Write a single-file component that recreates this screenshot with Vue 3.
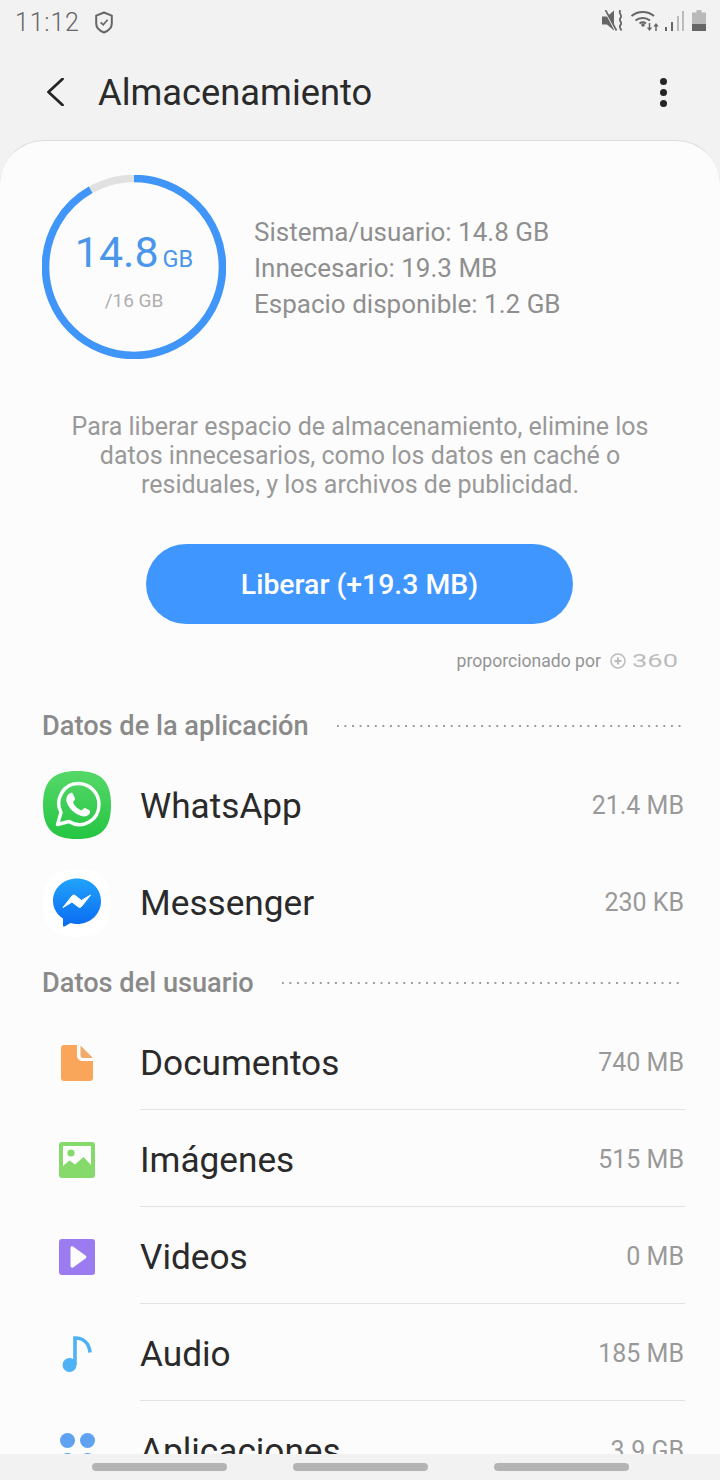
<script setup>
const appRows = [
  { name: 'WhatsApp', size: '21.4 MB', icon: 'whatsapp' },
  { name: 'Messenger', size: '230 KB', icon: 'messenger' }
];

const userRows = [
  { name: 'Documentos', size: '740 MB', icon: 'doc' },
  { name: 'Imágenes', size: '515 MB', icon: 'image' },
  { name: 'Videos', size: '0 MB', icon: 'video' },
  { name: 'Audio', size: '185 MB', icon: 'audio' },
  { name: 'Aplicaciones', size: '3.9 GB', icon: 'apps' }
];

const radius = 88.5;
const circumference = 2 * Math.PI * radius;
const used = 0.917;
const ringDash = `${circumference * used} ${circumference}`;
</script>

<template>
  <div class="page">
    <div class="status">
      <span class="clock">11:12</span>
      <svg class="shield" width="18" height="23" viewBox="0 0 18 23" fill="none" stroke="#666" stroke-width="2">
        <path d="M9 1.500 16.800 4.600V12.500C16.800 16.800 13 20 9 21.500 5 20 1.200 16.800 1.200 12.500V4.600Z" stroke-linejoin="round" />
        <path d="M5.600 11.300 8.200 13.800 12.600 8.800" stroke-width="1.700" />
      </svg>
      <svg class="status-right" width="110" height="24" viewBox="0 0 110 24">
        <path d="M1 6.500H6L13 .5 V20.500L6 14.500H1Z" fill="#666" />
        <path d="M3.500 0 14 20" stroke="#f2f2f2" stroke-width="1.600" />
        <path d="M4.500 0 15.500 20.500" stroke="#666" stroke-width="1.600" />
        <path d="M19.500 0C16.500 3 22 5 19.500 8 17 10.500 22 12.500 19.500 15 17.500 17 20 19 20.500 20.500" fill="none" stroke="#666" stroke-width="1.800" />
        <path d="M30.500 6C36.500 .5 47 .5 53 6M34.500 10.500C38.500 7 45 7 49 10.500M38.500 13.500C40.500 12 43 12 45 13.500" fill="none" stroke="#666" stroke-width="2" />
        <circle cx="42" cy="15" r="1.800" fill="#666" />
        <path d="M48.500 13V18" stroke="#666" stroke-width="1.500" />
        <path d="M45.800 17.500H51.200L48.500 21Z" fill="#666" />
        <path d="M55 21V16" stroke="#666" stroke-width="1.500" />
        <path d="M52.300 16.500H57.700L55 13Z" fill="#666" />
        <rect x="64" y="17" width="2" height="4" fill="#666" />
        <rect x="70" y="12" width="2" height="9" fill="#666" />
        <rect x="76" y="6" width="2" height="15" fill="#bbb" />
        <rect x="81" y="1" width="2" height="20" fill="#bbb" />
        <path d="M91 2.500H95.500V0H100.500V2.500H105V21H91Z" fill="#b9b9b9" />
        <rect x="91" y="14" width="14" height="7" fill="#666" />
      </svg>
    </div>

    <div class="topbar">
      <svg class="back" width="18" height="28" viewBox="0 0 18 28" fill="none" stroke="#252525" stroke-width="2.800">
        <path d="M16.500 1 2.500 14 16.500 27" stroke-linecap="round" stroke-linejoin="round" />
      </svg>
      <h1 class="title">Almacenamiento</h1>
      <div class="more"><i></i><i></i><i></i></div>
    </div>

    <div class="card">
      <div class="summary">
        <div class="ring">
          <svg width="184" height="184" viewBox="0 0 184 184">
            <circle cx="92" cy="92" :r="radius" fill="none" stroke="#e1e1e1" stroke-width="7.500" />
            <circle
              cx="92"
              cy="92"
              :r="radius"
              fill="none"
              stroke="#4096f8"
              stroke-width="7.500"
              :stroke-dasharray="ringDash"
              transform="rotate(-90 92 92)"
            />
          </svg>
          <div class="ring-text">
            <div class="ring-value">14.8<span class="ring-unit">GB</span></div>
            <div class="ring-total">/16 GB</div>
          </div>
        </div>
        <div class="info">
          <div>Sistema/usuario: 14.8 GB</div>
          <div>Innecesario: 19.3 MB</div>
          <div>Espacio disponible: 1.2 GB</div>
        </div>
      </div>

      <p class="hint">Para liberar espacio de almacenamiento, elimine los datos innecesarios, como los datos en caché o residuales, y los archivos de publicidad.</p>

      <button class="free">Liberar (+19.3 MB)</button>

      <div class="powered">
        <span>proporcionado por</span>
        <svg width="72" height="24" viewBox="0 0 72 24">
          <circle cx="8" cy="12" r="7" fill="none" stroke="#bdbdbd" stroke-width="1.600" />
          <path d="M4.500 12H11.500M8 8.500V15.500" stroke="#bdbdbd" stroke-width="2.200" />
          <text x="22" y="18" textLength="46" lengthAdjust="spacingAndGlyphs" class="logo-text">360</text>
        </svg>
      </div>

      <div class="section">
        <span>Datos de la aplicación</span>
        <div class="dots"></div>
      </div>
      <div v-for="row in appRows" :key="row.name" class="row">
        <div class="icon">
          <svg v-if="row.icon === 'whatsapp'" class="wa-icon" width="68" height="68" viewBox="0 0 68 68">
            <defs>
              <linearGradient id="wa" x1="0" y1="0" x2="0" y2="1">
                <stop offset="0" stop-color="#55d868" />
                <stop offset="1" stop-color="#25c543" />
              </linearGradient>
            </defs>
            <path d="M34 0C58 0 68 10 68 34S58 68 34 68 0 58 0 34 10 0 34 0Z" fill="url(#wa)" />
            <path d="M14.500 53.500 18 41.500C11.500 29 20 12.500 35 12.500 47 12.500 56 22 56 33.500 56 49 39.500 59 26 50.500Z" fill="none" stroke="#fff" stroke-width="3.400" stroke-linejoin="round" />
            <path d="M26.500 22.500C28 21.500 29.500 21.500 30 23L32 27.500C32.300 28.500 30.500 30.500 30 31.300 31.500 35 34.500 38 38.500 39.500 39.500 38.800 41 36.800 42 37L46.500 39.300C47.500 40 47 42.500 46 43.500 44 45.500 41 46 38.500 45 31 42.500 26.500 38 23.800 31.500 22.500 28 23.800 24.500 26.500 22.500Z" fill="#fff" />
          </svg>
          <svg v-else width="68" height="68" viewBox="0 0 68 68">
            <defs>
              <linearGradient id="ms" x1="0" y1="0" x2="0" y2="1">
                <stop offset="0" stop-color="#21a3fb" />
                <stop offset="1" stop-color="#0a6bf2" />
              </linearGradient>
            </defs>
            <path d="M34 0C58 0 68 10 68 34S58 68 34 68 0 58 0 34 10 0 34 0Z" fill="#fff" />
            <path d="M34 9.500C47.500 9.500 58 19 58 32S47.500 55 34 55C31.800 55 29.500 54.700 27.500 54L21.500 57.500C20.800 57.800 20 57.500 20 56.500V49.500C14 45.500 10 39.500 10 32 10 19 20.500 9.500 34 9.500Z" fill="url(#ms)" />
            <path d="M20 38.500 29 27C29.800 26 31 25.800 32 26.500L38.500 31.500 47.500 26 38.500 37.500C37.800 38.500 36.500 38.700 35.500 38L29 33Z" fill="#fff" stroke="#fff" stroke-linejoin="round" />
          </svg>
        </div>
        <span class="name">{{ row.name }}</span>
        <span class="size">{{ row.size }}</span>
      </div>

      <div class="section">
        <span>Datos del usuario</span>
        <div class="dots"></div>
      </div>
      <div v-for="row in userRows" :key="row.name" class="row user-row">
        <div class="icon">
          <svg v-if="row.icon === 'doc'" width="32" height="36" viewBox="0 0 32 36">
            <path d="M3 0H16V10C16 13.500 18 16 21.500 16H32V33C32 35 30.500 36 29 36H3C1.200 36 0 35 0 33V3C0 1.200 1.200 0 3 0Z" fill="#f9a65a" />
            <path d="M19.500 .5 32 13H22C20.500 13 19.500 12 19.500 10.500Z" fill="#f0ab6a" />
          </svg>
          <svg v-else-if="row.icon === 'image'" width="36" height="36" viewBox="0 0 36 36">
            <rect width="36" height="36" rx="3" fill="#86d96b" />
            <rect x="4" y="4" width="28" height="28" fill="#fdfdfd" />
            <circle cx="12" cy="11" r="3.600" fill="#86d96b" />
            <path d="M4 24 10.500 18.500 16 22.500 24.500 15 32 23V33H4Z" fill="#86d96b" />
          </svg>
          <svg v-else-if="row.icon === 'video'" width="36" height="36" viewBox="0 0 36 36">
            <rect width="36" height="36" rx="3" fill="#9b7cf0" />
            <path d="M11.500 9C11.500 7.500 13 7 14 7.600L26.500 16.500C27.700 17.400 27.700 18.600 26.500 19.500L14 28.400C13 29 11.500 28.500 11.500 27Z" fill="#fdfdfd" />
          </svg>
          <svg v-else-if="row.icon === 'audio'" width="30" height="36" viewBox="0 0 30 36">
            <circle cx="7.500" cy="29" r="7" fill="#4eb2f4" />
            <path d="M13 29V2C21 2 27 7 28 16.500" fill="none" stroke="#4eb2f4" stroke-width="3.600" />
          </svg>
          <div v-else class="apps"><i></i><i></i><i></i><i></i></div>
        </div>
        <span class="name">{{ row.name }}</span>
        <span class="size">{{ row.size }}</span>
      </div>
    </div>

    <div class="navbar"><i></i><i></i><i></i></div>
  </div>
</template>

<style>
html, body {
  margin: 0;
  background: #f2f2f2;
}
</style>

<style scoped>
.page {
  width: 720px;
  height: 1480px;
  overflow: hidden;
  background: #f2f2f2;
  display: flex;
  flex-direction: column;
  font-family: Roboto, "Liberation Sans", sans-serif;
}
.status {
  height: 44px;
  display: flex;
  align-items: center;
  padding: 0 0 0 15px;
  color: #666;
}
.clock {
  font-size: 25px;
  font-weight: 300;
  letter-spacing: 0.8px;
}
.shield {
  margin-left: 15px;
}
.status-right {
  margin-left: auto;
  margin-right: 9px;
}
.topbar {
  height: 96px;
  display: flex;
  align-items: center;
  padding: 0 0 0 46px;
}
.back {
  margin-right: 34px;
}
.title {
  margin: 0;
  font-size: 36.3px;
  font-weight: 400;
  color: #2a2a2a;
}
.more {
  margin-left: auto;
  margin-right: 53px;
  display: flex;
  flex-direction: column;
  gap: 4px;
}
.more i {
  width: 7px;
  height: 7px;
  border-radius: 50%;
  background: #252525;
}
.card {
  flex: 1;
  min-height: 0;
  overflow: hidden;
  box-sizing: border-box;
  background: #fcfcfc;
  border-top: 1px solid #dcdcdc;
  border-radius: 44px 44px 0 0;
  padding: 34px 36px 0 42px;
}
.summary {
  display: flex;
  align-items: center;
  gap: 28px;
}
.ring {
  position: relative;
  width: 184px;
  height: 184px;
  flex: none;
}
.ring svg {
  display: block;
}
.ring-text {
  position: absolute;
  inset: 0;
  display: flex;
  flex-direction: column;
  align-items: center;
}
.ring-value {
  margin-top: 50px;
  font-size: 43px;
  line-height: 54px;
  color: #4a96ea;
}
.ring-unit {
  margin-left: 4px;
  font-size: 23.5px;
}
.ring-total {
  margin-top: 3px;
  font-size: 19px;
  line-height: 24px;
  color: #aeaeae;
}
.info {
  margin-top: 2px;
  font-size: 26px;
  line-height: 36px;
  color: #8f8f8f;
}
.hint {
  width: 600px;
  margin: 53px 0 0 18px;
  font-size: 25px;
  line-height: 29px;
  color: #999;
  text-align: center;
}
.free {
  display: block;
  width: 427px;
  height: 80px;
  margin: 45px 0 0 104px;
  border: 0;
  border-radius: 40px;
  background: #4096ff;
  color: #fff;
  font-family: inherit;
  font-size: 28.4px;
  font-weight: 500;
}
.powered {
  height: 24px;
  margin-top: 25px;
  display: flex;
  align-items: center;
  justify-content: flex-end;
  gap: 9px;
  font-size: 17.6px;
  color: #949494;
  padding-right: 2px;
}
.logo-text {
  font-size: 18px;
  font-weight: 400;
  fill: #bdbdbd;
}
.section {
  height: 40px;
  padding-top: 2px;
  box-sizing: border-box;
  margin-top: 11px;
  margin-bottom: 12px;
  display: flex;
  align-items: center;
  gap: 28px;
  font-size: 27.2px;
  font-weight: 500;
  color: #8a8a8a;
}
.powered + .section {
  margin-top: 32px;
}
.dots {
  flex: 1;
  height: 2px;
  background-image: radial-gradient(circle, #9a9a9a 1px, transparent 1.2px);
  background-size: 7.6px 2px;
  background-position: -3px 0;
}
.row {
  height: 97px;
  display: flex;
  align-items: center;
  position: relative;
}
.icon {
  width: 70px;
  flex: none;
  display: flex;
  justify-content: center;
  align-items: center;
}
.wa-icon {
  margin-top: -2px;
}
.name {
  margin-left: 28px;
  font-size: 35.2px;
  color: #2a2a2a;
}
.size {
  margin-left: auto;
  font-size: 25px;
  color: #999;
}
.user-row::after {
  content: "";
  position: absolute;
  left: 98px;
  right: -1px;
  bottom: 1px;
  height: 1px;
  background: #e3e3e3;
}
.apps {
  display: grid;
  grid-template-columns: 15px 15px;
  gap: 5px;
}
.apps i {
  width: 15px;
  height: 15px;
  border-radius: 50%;
  background: #5fa2f2;
}
.navbar {
  height: 26px;
  flex: none;
  display: flex;
  justify-content: center;
  gap: 66px;
  padding-top: 9px;
  box-sizing: border-box;
  background: #f2f2f2;
}
.navbar i {
  width: 135px;
  height: 8px;
  border-radius: 4px;
  background: #b4b4b4;
}
</style>
